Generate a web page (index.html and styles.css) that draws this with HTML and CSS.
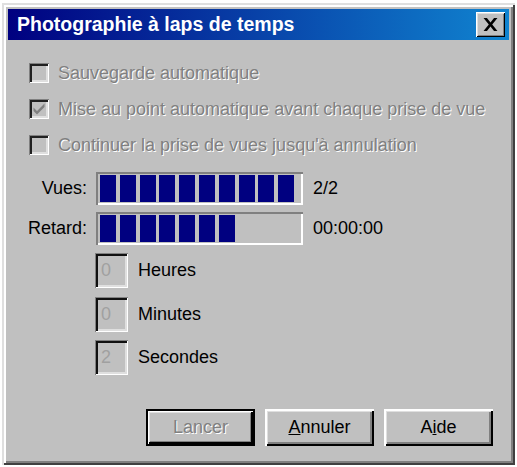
FILE: index.html
```html
<!DOCTYPE html>
<html lang="fr">
<head>
<meta charset="utf-8">
<title>Photographie à laps de temps</title>
<link rel="stylesheet" href="styles.css">
</head>
<body>
<div class="window">
  <div class="titlebar">
    <span class="title">Photographie à laps de temps</span>
    <span class="close"><svg width="15" height="13" viewBox="0 0 14 12"><path d="M0.5 0h3.2l3.3 4.2l3.3-4.2h3.2l-4.9 6l4.9 6h-3.2l-3.3-4.2l-3.3 4.2h-3.2l4.9-6z" fill="#000"/></svg></span>
  </div>
  <div class="client">
    <div class="checks">
      <div class="check-row"><span class="checkbox"></span><span class="disabled">Sauvegarde automatique</span></div>
      <div class="check-row"><span class="checkbox"><svg width="16" height="16" viewBox="0 0 16 16"><path d="M2.5 6.5l3.5 3.5l7.5-7.5v3.5l-7.5 7.5l-3.5-3.5z" fill="#808080"/></svg></span><span class="disabled">Mise au point automatique avant chaque prise de vue</span></div>
      <div class="check-row"><span class="checkbox"></span><span class="disabled">Continuer la prise de vues jusqu'à annulation</span></div>
    </div>
    <div class="progress-row first">
      <span class="plabel">Vues:</span>
      <div class="bar">
        <span class="blk"></span><span class="blk"></span><span class="blk"></span><span class="blk"></span><span class="blk"></span><span class="blk"></span><span class="blk"></span><span class="blk"></span><span class="blk"></span><span class="blk"></span>
      </div>
      <span class="pval">2/2</span>
    </div>
    <div class="progress-row second">
      <span class="plabel">Retard:</span>
      <div class="bar">
        <span class="blk"></span><span class="blk"></span><span class="blk"></span><span class="blk"></span><span class="blk"></span><span class="blk"></span><span class="blk"></span>
      </div>
      <span class="pval">00:00:00</span>
    </div>
    <div class="edits">
      <div class="edit-row"><span class="edit">0</span><span class="elabel">Heures</span></div>
      <div class="edit-row"><span class="edit">0</span><span class="elabel">Minutes</span></div>
      <div class="edit-row"><span class="edit">2</span><span class="elabel">Secondes</span></div>
    </div>
    <div class="buttons">
      <span class="btn default"><span class="disabled">Lancer</span></span>
      <span class="btn"><span><u>A</u>nnuler</span></span>
      <span class="btn"><span>A<u>i</u>de</span></span>
    </div>
  </div>
</div>
</body>
</html>
```
FILE: styles.css
```css
html, body {
  margin: 0;
  padding: 0;
  background: #ffffff;
}
body {
  padding: 3px 0 0 2px;
  font-family: "Liberation Sans", Arial, sans-serif;
  font-size: 18px;
  color: #000;
}
.window {
  box-sizing: border-box;
  width: 513px;
  height: 462px;
  background: #c0c0c0;
  padding: 6px;
  display: flex;
  flex-direction: column;
  box-shadow: inset 2px 2px 0 #dfdfdf, inset -2px -2px 0 #404040, inset 4px 4px 0 #ffffff, inset -4px -4px 0 #808080;
}
.titlebar {
  height: 31px;
  flex: none;
  background: linear-gradient(to right, #000080, #1084d0);
  display: flex;
  align-items: center;
  justify-content: space-between;
  padding: 0 4px 0 9px;
}
.title {
  color: #fff;
  font-weight: bold;
  font-size: 19.5px;
}
.close {
  box-sizing: border-box;
  width: 29px;
  height: 25px;
  background: #c0c0c0;
  display: flex;
  align-items: center;
  justify-content: center;
  box-shadow: inset 1px 1px 0 #fff, inset -1px -1px 0 #000, inset 2px 2px 0 #dfdfdf, inset -2px -2px 0 #808080;
}
.client {
  flex: 1;
  display: flex;
  flex-direction: column;
  padding-top: 15px;
}
.checks {
  padding-left: 21px;
  display: flex;
  flex-direction: column;
}
.check-row {
  height: 36px;
  display: flex;
  align-items: center;
  gap: 9px;
}
.checkbox {
  box-sizing: border-box;
  width: 20px;
  height: 20px;
  background: #c0c0c0;
  display: flex;
  align-items: center;
  justify-content: center;
  box-shadow: inset 1px 1px 0 #808080, inset -1px -1px 0 #fff, inset 3px 3px 0 #202020, inset -3px -3px 0 #dfdfdf;
}
.disabled {
  color: #808080;
  text-shadow: 1px 1px 0 #ffffff;
}
.progress-row {
  display: flex;
  align-items: center;
}
.progress-row.first { margin-top: 9px; }
.progress-row.second { margin-top: 7px; }
.plabel {
  width: 79px;
  text-align: right;
  margin-right: 9px;
}
.bar {
  box-sizing: border-box;
  width: 207px;
  height: 33px;
  padding: 3px 4px;
  display: flex;
  gap: 3.8px;
  box-shadow: inset 2px 2px 0 #808080, inset -2px -2px 0 #fff;
}
.blk {
  width: 16px;
  height: 100%;
  background: #000080;
}
.pval {
  margin-left: 10px;
}
.edits {
  margin-top: 8px;
  padding-left: 87px;
  display: flex;
  flex-direction: column;
  gap: 8.5px;
}
.edit-row {
  display: flex;
  align-items: center;
}
.edit {
  box-sizing: border-box;
  width: 33px;
  height: 35px;
  padding: 0 0 0 6px;
  display: flex;
  align-items: center;
  color: #a0a0a0;
  box-shadow: inset 1px 1px 0 #808080, inset -1px -1px 0 #fff, inset 3px 3px 0 #101010, inset -3px -3px 0 #dfdfdf;
}
.elabel {
  margin-left: 10px;
}
.buttons {
  margin-top: auto;
  margin-bottom: 13px;
  display: flex;
  justify-content: flex-end;
  gap: 10px;
  padding-right: 16px;
}
.btn {
  box-sizing: border-box;
  width: 109px;
  height: 37px;
  display: flex;
  align-items: center;
  justify-content: center;
  box-shadow: inset 2px 2px 0 #fff, inset -2px -2px 0 #000, inset 3px 3px 0 #dfdfdf, inset -4px -4px 0 #808080;
}
.btn.default {
  box-shadow: inset 0 0 0 2px #000, inset 3px 3px 0 #fff, inset -4px -4px 0 #000, inset 4px 4px 0 #dfdfdf, inset -5px -5px 0 #808080;
}
```
